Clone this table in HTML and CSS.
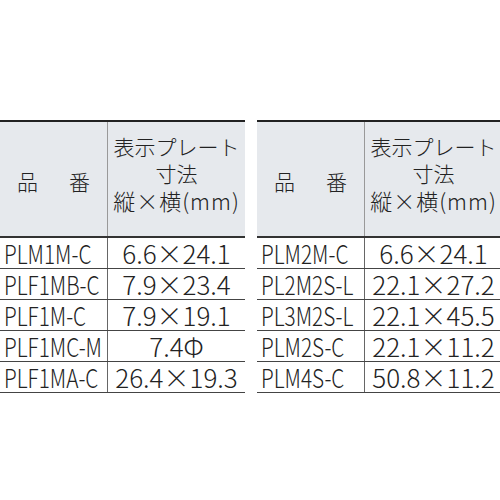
FILE: index.html
```html
<!DOCTYPE html>
<html lang="ja">
<head>
<meta charset="utf-8">
<link rel="stylesheet" href="styles.css">
</head>
<body>
<div class="wrap">
  <table class="spec">
    <tr class="head">
      <th class="c1"><span class="hin">品　番</span></th>
      <th class="c2">表示プレート<br>寸法<br><span class="small">縦×横(mm)</span></th>
    </tr>
    <tr><td class="c1"><span class="n">PLM1M-C</span></td><td class="c2"><span class="n">6.6×24.1</span></td></tr>
    <tr><td class="c1"><span class="n">PLF1MB-C</span></td><td class="c2"><span class="n">7.9×23.4</span></td></tr>
    <tr><td class="c1"><span class="n">PLF1M-C</span></td><td class="c2"><span class="n">7.9×19.1</span></td></tr>
    <tr><td class="c1"><span class="n">PLF1MC-M</span></td><td class="c2"><span class="n">7.4Φ</span></td></tr>
    <tr><td class="c1"><span class="n">PLF1MA-C</span></td><td class="c2"><span class="n">26.4×19.3</span></td></tr>
  </table>
  <table class="spec">
    <tr class="head">
      <th class="c1"><span class="hin">品　番</span></th>
      <th class="c2">表示プレート<br>寸法<br><span class="small">縦×横(mm)</span></th>
    </tr>
    <tr><td class="c1"><span class="n">PLM2M-C</span></td><td class="c2"><span class="n">6.6×24.1</span></td></tr>
    <tr><td class="c1"><span class="n">PL2M2S-L</span></td><td class="c2"><span class="n">22.1×27.2</span></td></tr>
    <tr><td class="c1"><span class="n">PL3M2S-L</span></td><td class="c2"><span class="n">22.1×45.5</span></td></tr>
    <tr><td class="c1"><span class="n">PLM2S-C</span></td><td class="c2"><span class="n">22.1×11.2</span></td></tr>
    <tr><td class="c1"><span class="n">PLM4S-C</span></td><td class="c2"><span class="n">50.8×11.2</span></td></tr>
  </table>
</div>
</body>
</html>
```
FILE: styles.css
```css
html, body {
  margin: 0;
  padding: 0;
  background: #ffffff;
}
body {
  font-family: "Noto Sans CJK JP", "Noto Sans", sans-serif;
  font-weight: 300;
  color: #222;
}
.wrap {
  display: flex;
  gap: 12px;
  padding-top: 120px;
}
.spec {
  border-collapse: collapse;
  table-layout: fixed;
  width: 244px;
  border-top: 2px solid #222;
}
.spec td, .spec th {
  padding: 0;
  white-space: nowrap;
}
.c1 { width: 107px; }
.c2 { width: 137px; border-left: 1px solid #666; }
.head th {
  background: #e6e9ed;
  height: 104px;
  font-weight: 300;
  font-size: 21px;
  line-height: 27px;
  border-bottom: 2px solid #333;
  text-align: center;
  vertical-align: middle;
}
.head .c2 { border-left-color: #999; padding-bottom: 10px; }
.hin { letter-spacing: 5px; padding-left: 5px; position: relative; top: 2px; }
.small { font-size: 22px; letter-spacing: 1px; }
.spec td {
  height: 30px;
  border-bottom: 1px solid #444;
  font-size: 26px;
  line-height: 30px;
}
.spec td.c1 { text-align: left; padding-left: 4px; }
.spec td.c2 { text-align: center; }
.n { display: inline-block; }
.c1 .n { transform: scaleX(0.8); transform-origin: left center; margin-right: -24px; }
```
